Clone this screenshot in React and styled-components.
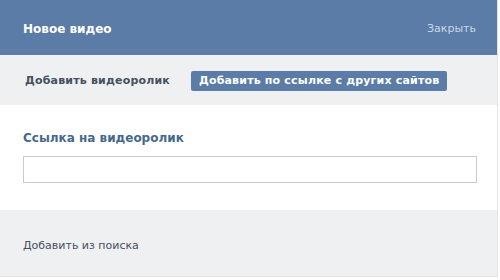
import React from 'react'
import styled, { createGlobalStyle } from 'styled-components'

const Global = createGlobalStyle`
  body {
    margin: 0;
    background: #fff;
    font-family: "DejaVu Sans", Tahoma, sans-serif;
  }
`

const App = () => (
  <>
    <Global />
    <Box>
      <Header>
        <Title>Новое видео</Title>
        <Close>Закрыть</Close>
      </Header>
      <Tabs>
        <Tab>Добавить видеоролик</Tab>
        <Tab active>Добавить по ссылке с других сайтов</Tab>
      </Tabs>
      <Body>
        <Label>Ссылка на видеоролик</Label>
        <Input type="text" />
      </Body>
      <Footer>
        <FooterLink>Добавить из поиска</FooterLink>
      </Footer>
    </Box>
  </>
)

const Box = styled.div`
  width: 497px;
  height: 276px;
  display: flex;
  flex-direction: column;
  border-right: 1px solid #e1e3e6;
  border-bottom: 1px solid #e1e3e6;
  background: #fff;
`

const Header = styled.header`
  height: 55px;
  flex-shrink: 0;
  background: #5b7ca6;
  display: flex;
  align-items: center;
  justify-content: space-between;
  padding: 2px 21px 0 23px;
  box-sizing: border-box;
`

const Title = styled.h1`
  margin: 0;
  font-size: 12px;
  font-weight: bold;
  color: #fff;
`

const Close = styled.span`
  font-size: 11px;
  color: #c9d6e6;
`

const Tabs = styled.nav`
  height: 50px;
  flex-shrink: 0;
  background: #eef0f2;
  display: flex;
  align-items: center;
  gap: 13px;
  padding: 1px 0 0 17px;
  box-sizing: border-box;
`

const Tab = styled.span`
  font-size: 11px;
  line-height: 12px;
  font-weight: bold;
  letter-spacing: 0.18px;
  padding: 4px 8px;
  border-radius: 2px;
  color: ${p => (p.active ? '#fff' : '#45515e')};
  background: ${p => (p.active ? '#5b7ca6' : 'transparent')};
`

const Body = styled.section`
  height: 105px;
  flex-shrink: 0;
  padding: 26px 23px 0 23px;
  box-sizing: border-box;
  display: flex;
  flex-direction: column;
`

const Label = styled.div`
  font-size: 12px;
  font-weight: bold;
  color: #45688e;
`

const Input = styled.input`
  margin-top: 11px;
  height: 27px;
  width: 454px;
  box-sizing: border-box;
  border: 1px solid #c8cbcf;
  outline: none;
`

const Footer = styled.footer`
  flex: 1;
  background: #eef0f2;
  display: flex;
  align-items: center;
  padding: 4px 23px 0;
`

const FooterLink = styled.span`
  font-size: 11px;
  color: #45515e;
`

export default App
